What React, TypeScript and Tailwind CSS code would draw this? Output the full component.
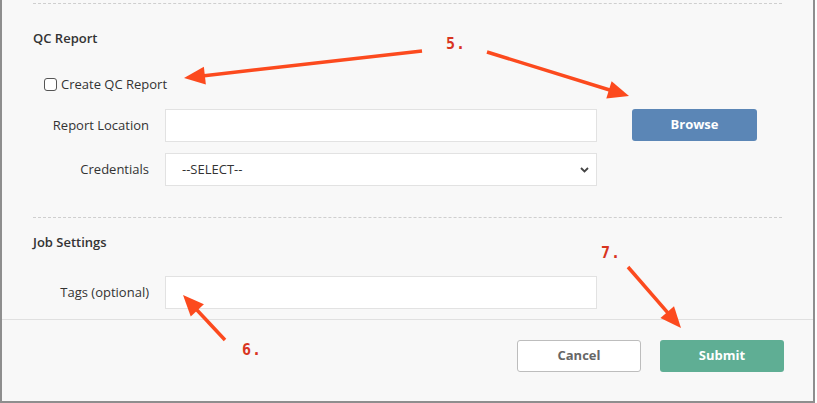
const arrows = [
  { x1: 422, y1: 51, x2: 184, y2: 78 },
  { x1: 487, y1: 52, x2: 629, y2: 96 },
  { x1: 225, y1: 340, x2: 183, y2: 295 },
  { x1: 628, y1: 267, x2: 681, y2: 328 },
];

const labels = [
  { text: "5.", x: 446, y: 35 },
  { text: "6.", x: 242, y: 341 },
  { text: "7.", x: 601, y: 244 },
];

const headPoints = (a: { x1: number; y1: number; x2: number; y2: number }) => {
  const dx = a.x2 - a.x1;
  const dy = a.y2 - a.y1;
  const len = Math.hypot(dx, dy);
  const ux = dx / len;
  const uy = dy / len;
  const back = 21;
  const half = 9;
  const bx = a.x2 - ux * back;
  const by = a.y2 - uy * back;
  return `${a.x2},${a.y2} ${bx - uy * half},${by + ux * half} ${bx + uy * half},${by - ux * half}`;
};

const Annotations = () => (
  <>
    <svg className="pointer-events-none absolute inset-0" width={817} height={403}>
      {arrows.map((a, i) => {
        const len = Math.hypot(a.x2 - a.x1, a.y2 - a.y1);
        const ex = a.x2 - ((a.x2 - a.x1) / len) * 16;
        const ey = a.y2 - ((a.y2 - a.y1) / len) * 16;
        return (
          <g key={i}>
            <line x1={a.x1} y1={a.y1} x2={ex} y2={ey} stroke="#fc4a1e" strokeWidth={3.5} />
            <polygon points={headPoints(a)} fill="#fc4a1e" />
          </g>
        );
      })}
    </svg>
    {labels.map((l) => (
      <span
        key={l.text}
        className="pointer-events-none absolute font-['DejaVu_Sans_Mono',monospace] text-[15px] font-bold leading-[18px] tracking-[1px] text-[#d8351f]"
        style={{ left: l.x, top: l.y }}
      >
        {l.text}
      </span>
    ))}
  </>
);

const Field = ({ label, children }: { label: string; children: React.ReactNode }) => (
  <div className="flex items-center">
    <label className="w-[116px] text-right text-[13px] text-[#333]">{label}</label>
    <div className="ml-4 w-[432px]">{children}</div>
  </div>
);

const App = () => {
  return (
    <div className="relative h-[403px] w-[817px] bg-white font-['Open_Sans',sans-serif]">
      <div className="flex h-[403px] w-[815px] flex-col border-x-2 border-b-2 border-[#8e8e8e] bg-[#f8f8f8]">
        <div className="px-[31px] pt-[3px]">
          <div className="border-t border-dashed border-[#cfcfcf]" />

          <h3 className="mt-[25px] text-[13px] font-semibold leading-[18px] text-[#333]">QC Report</h3>

          <label className="ml-[11px] mt-[28px] flex items-center gap-[4px] text-[13px] leading-[18px] text-[#333]">
            <span className="h-[13px] w-[13px] rounded-[3px] border border-[#555] bg-white" />
            Create QC Report
          </label>

          <div className="mt-[16px] flex items-start">
            <div className="flex flex-col gap-[11px]">
              <Field label="Report Location">
                <input className="h-[33px] w-full border border-[#e2e2e2] bg-white px-3 outline-none" />
              </Field>
              <Field label="Credentials">
                <div className="relative flex h-[33px] w-full items-center border border-[#e2e2e2] bg-white pl-[16px] text-[13px] text-[#333]">
                  --SELECT--
                  <svg className="absolute right-[7px] top-[13px]" width="9" height="6" viewBox="0 0 9 6">
                    <path d="M1 1l3.5 3.5L8 1" fill="none" stroke="#444" strokeWidth="1.8" />
                  </svg>
                </div>
              </Field>
            </div>
            <button className="ml-[35px] h-[32px] w-[125px] rounded-[3px] bg-[#5b86b6] text-[13px] font-bold text-white">
              Browse
            </button>
          </div>

          <div className="mt-[31px] border-t border-dashed border-[#cfcfcf]" />

          <h3 className="mt-[15px] text-[13px] font-semibold leading-[18px] text-[#333]">Job Settings</h3>

          <div className="mt-[25px]">
            <Field label="Tags (optional)">
              <input className="h-[33px] w-full border border-[#e2e2e2] bg-white px-3 outline-none" />
            </Field>
          </div>
        </div>

        <div className="mt-[10px] border-t border-[#e0e0e0]" />

        <div className="flex justify-end gap-[19px] pr-[29px] pt-[20px]">
          <button className="h-[32px] w-[124px] rounded-[3px] border border-[#bdbdbd] bg-white text-[13px] font-bold text-[#666]">
            Cancel
          </button>
          <button className="h-[32px] w-[124px] rounded-[3px] bg-[#5fae94] text-[13px] font-bold text-white">
            Submit
          </button>
        </div>
      </div>
      <Annotations />
    </div>
  );
};

export default App;
